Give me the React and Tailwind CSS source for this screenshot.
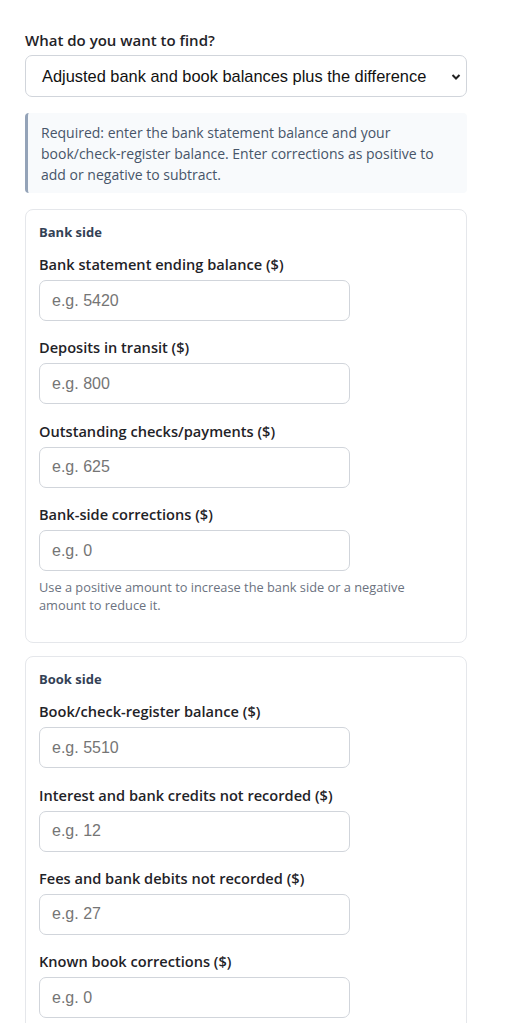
import React from "react";

const sans = { fontFamily: '"Open Sans", "Noto Sans", sans-serif' };

function Field({ label, placeholder, help }) {
  return (
    <div className="flex flex-col">
      <label className="text-[14.6px] font-semibold leading-5 text-[#1f2328] mb-[6px]">{label}</label>
      <input
        type="text"
        placeholder={placeholder}
        className="w-[311px] h-[41px] rounded-[7px] border border-[#d1d5db] bg-white px-[12px] text-[16px] text-[#111] placeholder:text-[#757575] outline-none"
        style={{ fontFamily: '"Liberation Sans", Arial, sans-serif' }}
      />
      {help && (
        <p className="mt-[7px] text-[12.8px] leading-[18px] text-[#6b7280] pr-[40px]">{help}</p>
      )}
    </div>
  );
}

function Card({ title, fields }) {
  return (
    <div className="rounded-lg border border-[#e5e7eb] bg-white px-[13px] pt-[12px] pb-[28px]">
      <div className="text-[13px] font-bold leading-5 text-[#334155] mb-[12px]">{title}</div>
      <div className="flex flex-col gap-[16.4px]">
        {fields.map((f, i) => (
          <Field key={i} {...f} />
        ))}
      </div>
    </div>
  );
}

export default function App() {
  return (
    <div className="bg-white min-h-screen" style={sans}>
      <div className="pl-[25px] pt-[30px] w-[467px]">
        <label className="block text-[15px] font-semibold leading-5 text-[#1f2328] mb-[5px]">
          What do you want to find?
        </label>
        <div className="relative h-[42px] rounded-[7px] border border-[#d1d5db] bg-white flex items-center">
          <span
            className="pl-[16px] pt-[1px] text-[16.4px] text-[#111]"
            style={{ fontFamily: '"Liberation Sans", Arial, sans-serif' }}
          >
            Adjusted bank and book balances plus the difference
          </span>
          <svg className="absolute right-[4px] top-[17px]" width="12" height="8" viewBox="0 0 12 8">
            <path d="M2.5 2 L6 5.5 L9.5 2" fill="none" stroke="#222" strokeWidth="2" />
          </svg>
        </div>

        <div className="mt-4 rounded-[4px] border-l-[3px] border-[#94a3b8] bg-[#f8fafc] pl-[13px] pr-[12px] pt-[9px] pb-[8px] text-[14px] leading-[21px] text-[#475569]">
          Required: enter the bank statement balance and your book/check-register balance. Enter corrections as positive to add or negative to subtract.
        </div>

        <div className="mt-4 flex flex-col gap-[13px]">
          <Card
            title="Bank side"
            fields={[
              { label: "Bank statement ending balance ($)", placeholder: "e.g. 5420" },
              { label: "Deposits in transit ($)", placeholder: "e.g. 800" },
              { label: "Outstanding checks/payments ($)", placeholder: "e.g. 625" },
              {
                label: "Bank-side corrections ($)",
                placeholder: "e.g. 0",
                help: "Use a positive amount to increase the bank side or a negative amount to reduce it.",
              },
            ]}
          />
          <Card
            title="Book side"
            fields={[
              { label: "Book/check-register balance ($)", placeholder: "e.g. 5510" },
              { label: "Interest and bank credits not recorded ($)", placeholder: "e.g. 12" },
              { label: "Fees and bank debits not recorded ($)", placeholder: "e.g. 27" },
              {
                label: "Known book corrections ($)",
                placeholder: "e.g. 0",
                help: "Use a positive amount to increase the book side or a negative amount to reduce it.",
              },
            ]}
          />
        </div>
      </div>
    </div>
  );
}
